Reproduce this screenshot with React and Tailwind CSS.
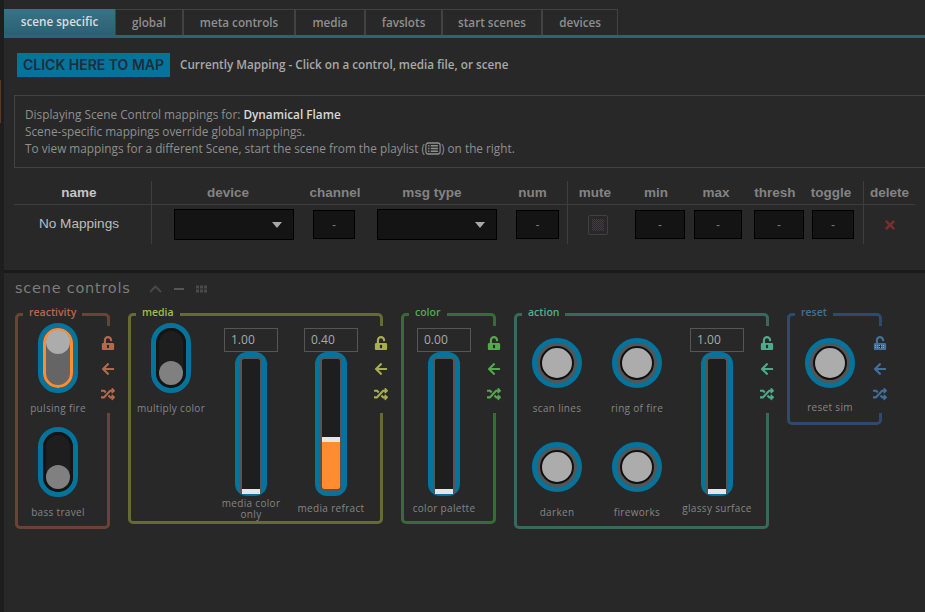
import React from "react";
import { FaUnlockAlt, FaArrowLeft, FaRandom, FaTimes } from "react-icons/fa";

const tabs = [
  ["scene specific", "w-[111px]"],
  ["global", "w-[68px]"],
  ["meta controls", "w-[112px]"],
  ["media", "w-[70px]"],
  ["favslots", "w-[77px]"],
  ["start scenes", "w-[100px]"],
  ["devices", "w-[76px]"],
];

function Tabs() {
  return (
    <div className="flex h-[29px] border-b-[3px] border-[#2a6478] pl-0">
      {tabs.map(([t, w], i) =>
        i === 0 ? (
          <div key={t} className={`${w} flex items-center justify-center bg-gradient-to-b from-[#3a7386] to-[#2a6073] text-[11.7px] font-semibold text-[#dcdcdc]`}>{t}</div>
        ) : (
          <div key={t} className={`${w} flex items-center justify-center border border-b-0 border-[#424242] text-[11.7px] font-semibold text-[#8f8f8f]`}>{t}</div>
        )
      )}
    </div>
  );
}

function Caret() {
  return (
    <svg width="10" height="6" viewBox="0 0 10 6" className="mr-[11px]">
      <path d="M0 0h10L5 6z" fill="#a8a8a8" />
    </svg>
  );
}

const Sel = ({ w }) => (
  <div className={`${w} flex h-[31px] items-center justify-end border border-black bg-[#141414]`}>
    <Caret />
  </div>
);
const Inp = ({ w }) => (
  <div className={`${w} flex h-[29px] items-center justify-center border border-black bg-[#141414] text-[12px] text-[#777]`}>-</div>
);

function MappingTable() {
  const hd = "flex h-[24px] items-center justify-center border-b border-[#3e3e3e] pt-[1px] text-[13.5px] font-bold text-[#838383]";
  const cell = "flex h-[39px] items-center";
  return (
    <div className="ml-[10px] mt-[13px] grid w-[901px] grid-cols-[138px_152px_62px_132px_70px_54px_68px_52px_66px_46px_10px_51px]" style={{ fontFamily: '"Liberation Sans", sans-serif' }}>
      <div className={`${hd} border-r border-r-[#3e3e3e] pr-[7px] text-[#c4c4c4]`}>name</div>
      <div className={hd}>device</div>
      <div className={hd}>channel</div>
      <div className={hd}>msg type</div>
      <div className={`${hd} border-r border-r-[#3e3e3e]`}>num</div>
      <div className={hd}>mute</div>
      <div className={hd}>min</div>
      <div className={hd}>max</div>
      <div className={hd}>thresh</div>
      <div className={hd}>toggle</div>
      <div className={`${hd} border-r border-r-[#3e3e3e]`}></div>
      <div className={hd}>delete</div>

      <div className={`${cell} justify-center border-r border-[#3e3e3e] pr-[7px] text-[13.6px] text-[#bdbdbd]`}>No Mappings</div>
      <div className={`${cell} pl-[22px]`}><Sel w="w-[120px]" /></div>
      <div className={`${cell} pl-[9px]`}><Inp w="w-[42px]" /></div>
      <div className={`${cell} pl-[11px]`}><Sel w="w-[120px]" /></div>
      <div className={`${cell} border-r border-[#3e3e3e] pl-[18px]`}><Inp w="w-[43px]" /></div>
      <div className={`${cell} pl-[20px]`}>
        <div className="flex h-[20px] w-[20px] items-center justify-center rounded-[2px] border border-[#404040]">
          <svg width="12" height="12">
            <defs>
              <pattern id="dth" width="2" height="2" patternUnits="userSpaceOnUse">
                <rect width="1" height="1" fill="#4a3c40" />
                <rect x="1" y="1" width="1" height="1" fill="#3c3c44" />
              </pattern>
            </defs>
            <rect width="12" height="12" fill="url(#dth)" />
          </svg>
        </div>
      </div>
      <div className={`${cell} pl-[13px]`}><Inp w="w-[50px]" /></div>
      <div className={`${cell} pl-[4px]`}><Inp w="w-[50px]" /></div>
      <div className={`${cell} pl-[12px]`}><Inp w="w-[50px]" /></div>
      <div className={`${cell} pl-[4px]`}><Inp w="w-[43px]" /></div>
      <div className={`${cell} border-r border-[#3e3e3e]`}></div>
      <div className={`${cell} justify-center`}><FaTimes className="text-[14px] text-[#7c2d2d]" /></div>
    </div>
  );
}

const Label = ({ children }) => (
  <div className="text-center text-[10px] leading-[11px] tracking-[0.32px] text-[#858585]">{children}</div>
);

function Toggle({ label, on }) {
  return (
    <div className="flex h-[100px] w-[80px] flex-col items-center">
      <div className="relative h-[70px] w-[40px] rounded-[20px] border-[5px] border-[#04749c]">
        {on ? (
          <div className="flex h-full w-full flex-col rounded-[15px] border-[3px] border-[#ff8c2e] bg-[#656565]">
            <div className="-mt-[1px] h-[24px] w-[24px] rounded-full bg-[#acacac]" />
          </div>
        ) : (
          <div className="flex h-full w-full flex-col justify-end rounded-[15px] border-[3px] border-[#141414] bg-[#1e1e1e]">
            <div className="h-[24px] w-[24px] rounded-full bg-[#808080]" />
          </div>
        )}
      </div>
      <div className="flex h-[30px] items-center"><Label>{label}</Label></div>
    </div>
  );
}

function Knob({ label, h = "h-[100px]" }) {
  return (
    <div className={`flex ${h} w-[80px] flex-col items-center pt-[15px]`}>
      <div className="h-[50px] w-[50px] rounded-full border-[5px] border-[#04749c] bg-[#555] p-[3px]">
        <div className="h-full w-full rounded-full border-[2.5px] border-[#111] bg-[#acacac]" />
      </div>
      <div className="flex flex-1 items-center pt-[5px]"><Label>{label}</Label></div>
    </div>
  );
}

function Slider({ label, value, fill = 0 }) {
  const outer = fill > 0 ? "border-b-[5px]" : "border-b-[2px]";
  const inner = fill > 0 ? "rounded-[4px] border-2" : "rounded-t-[4px] border-x-2 border-t-2";
  return (
    <div className="flex w-[80px] flex-col items-center pt-[5px]">
      <div className="flex h-[24px] w-[54px] items-center border border-[#555] pl-[6px] text-[12px] text-[#a8a8a8]">{value}</div>
      <div className={`h-[144px] w-[32px] rounded-[12px] border-x-[5px] border-t-[5px] border-[#04749c] ${outer}`}>
        <div className={`flex h-full w-full flex-col justify-end border-[#555] bg-[#1e1e1e] ${inner}`}>
          <div className="h-[5px] w-full shrink-0 bg-[#e6e6e6]" />
          {fill > 0 && <div className="w-full shrink-0 rounded-b-[2px] bg-[#ff8c2e]" style={{ height: fill }} />}
        </div>
      </div>
      <div className="flex h-[25px] w-[100px] items-center justify-center"><Label>{label}</Label></div>
    </div>
  );
}

function Icons({ color, dither }) {
  return (
    <div className={`absolute right-[-10px] top-[10px] flex h-[87px] w-[18px] flex-col items-center justify-between bg-[#282828] pb-[12px] pt-[10px] text-[14px] ${color}`}>
      <div className="relative">
        <FaUnlockAlt />
        {dither && (
          <svg className="absolute left-0 top-[7px]" width="14" height="7">
            <defs>
              <pattern id="dthb" width="2" height="2" patternUnits="userSpaceOnUse">
                <rect width="1" height="1" fill="#7da3c8" />
              </pattern>
            </defs>
            <rect x="2" y="1" width="10" height="5" fill="url(#dthb)" />
          </svg>
        )}
      </div>
      <FaArrowLeft />
      <FaRandom />
    </div>
  );
}

function Group({ title, titleColor, border, iconColor, children, cls = "", dither }) {
  return (
    <div className={`relative rounded-[5px] border-[3px] pb-0 pl-0 pr-[9px] pt-[7px] ${border} ${cls}`}>
      <div className={`absolute left-[5px] top-[-12px] flex h-[18px] items-center bg-[#282828] px-[6px] text-[10.5px] font-semibold ${titleColor}`}>{title}</div>
      {children}
      <Icons color={iconColor} dither={dither} />
    </div>
  );
}

function SceneControls() {
  return (
    <div className="flex items-start gap-[18px] pl-[11px] pt-[14px]">
      <Group title="reactivity" titleColor="text-[#b9674b]" border="border-[#6b4334]" iconColor="text-[#b5694c]" cls="h-[216px]">
        <div className="flex flex-col gap-1">
          <Toggle label="pulsing fire" on />
          <Toggle label="bass travel" />
        </div>
      </Group>
      <Group title="media" titleColor="text-[#a3bf45]" border="border-[#666a33]" iconColor="text-[#a8ad4e]">
        <div className="flex items-start">
          <Toggle label="multiply color" />
          <Slider label={<>media color<br />only</>} value="1.00" />
          <Slider label="media refract" value="0.40" fill={47} />
        </div>
      </Group>
      <Group title="color" titleColor="text-[#56a84e]" border="border-[#386b38]" iconColor="text-[#56a84e]">
        <Slider label="color palette" value="0.00" />
      </Group>
      <Group title="action" titleColor="text-[#4fb08f]" border="border-[#38695a]" iconColor="text-[#4fa98a]" cls="h-[216px]">
        <div className="flex items-start">
          <div className="flex flex-col gap-1">
            <Knob label="scan lines" />
            <Knob label="darken" />
          </div>
          <div className="flex flex-col gap-1">
            <Knob label="ring of fire" />
            <Knob label="fireworks" />
          </div>
          <Slider label="glassy surface" value="1.00" />
        </div>
      </Group>
      <Group title="reset" titleColor="text-[#3f7199]" border="border-[#2e4a6e]" iconColor="text-[#41709f]" cls="h-[112px]" dither>
        <Knob label="reset sim" h="h-[99px]" />
      </Group>
    </div>
  );
}

export default function App() {
  return (
    <div className="flex h-[612px] w-[925px] overflow-hidden bg-[#282828]" style={{ fontFamily: '"Open Sans", sans-serif' }}>
      <div className="w-[4px] shrink-0 bg-[#1e1e1e] pt-[80px]">
        <div className="h-[43px] w-[1px] bg-[#5a3a22]" />
      </div>
      <div className="min-w-0 flex-1">
        <div className="h-[270px]">
          <div className="pt-[9px]"><Tabs /></div>
          <div className="ml-[13px] mt-[15px] flex h-[24px] items-center">
            <div className="flex h-[24px] w-[153px] items-center justify-center bg-[#04749c] pb-[1px] text-[14px] font-semibold text-[#1f2c3a]" style={{ fontFamily: 'Inter, sans-serif' }}>CLICK HERE TO MAP</div>
            <div className="ml-[10px] text-[11.7px] font-semibold text-[#a8a8a8]">Currently Mapping - Click on a control, media file, or scene</div>
          </div>
          <div className="ml-[10px] mt-[18px] flex h-[73px] w-[930px] flex-col justify-center border border-[#424242] pl-[10px] text-[11.8px] leading-[17px] text-[#8f8f8f]">
            <div>Displaying Scene Control mappings for: <span className="font-semibold text-[#d8d8d8]">Dynamical Flame</span></div>
            <div>Scene-specific mappings override global mappings.</div>
            <div className="flex items-center">
              To view mappings for a different Scene, start the scene from the playlist (
              <svg width="16" height="13" viewBox="0 0 18 13" preserveAspectRatio="none">
                <rect x="1" y="1" width="16" height="11" rx="2.5" fill="none" stroke="#8f8f8f" strokeWidth="1.3" />
                <path d="M3.5 3.7h1.5M3.5 6.5h1.5M3.5 9.3h1.5M6.5 3.7h8M6.5 6.5h8M6.5 9.3h8" stroke="#8f8f8f" strokeWidth="1.4" />
              </svg>
              ) on the right.
            </div>
          </div>
          <MappingTable />
        </div>
        <div className="h-[3px] bg-[#1a1a1a]" />
        <div className="ml-[11px] mt-[6px] flex h-[20px] items-center">
          <div className="w-[135px] text-[14.5px] tracking-[0.75px] text-[#7d7d7d]" style={{ fontFamily: '"DejaVu Sans", sans-serif' }}>scene controls</div>
          <svg width="60" height="12" viewBox="0 0 60 12">
            <path d="M0 9l5.5-5.5L11 9" fill="none" stroke="#484848" strokeWidth="2" />
            <path d="M24 6h10" stroke="#555" strokeWidth="2" />
            <path d="M46 2.5h3v3h-3zM50 2.5h3v3h-3zM54 2.5h3v3h-3zM46 6.5h3v3h-3zM50 6.5h3v3h-3zM54 6.5h3v3h-3z" fill="#4a4a4a" />
          </svg>
        </div>
        <SceneControls />
      </div>
    </div>
  );
}
